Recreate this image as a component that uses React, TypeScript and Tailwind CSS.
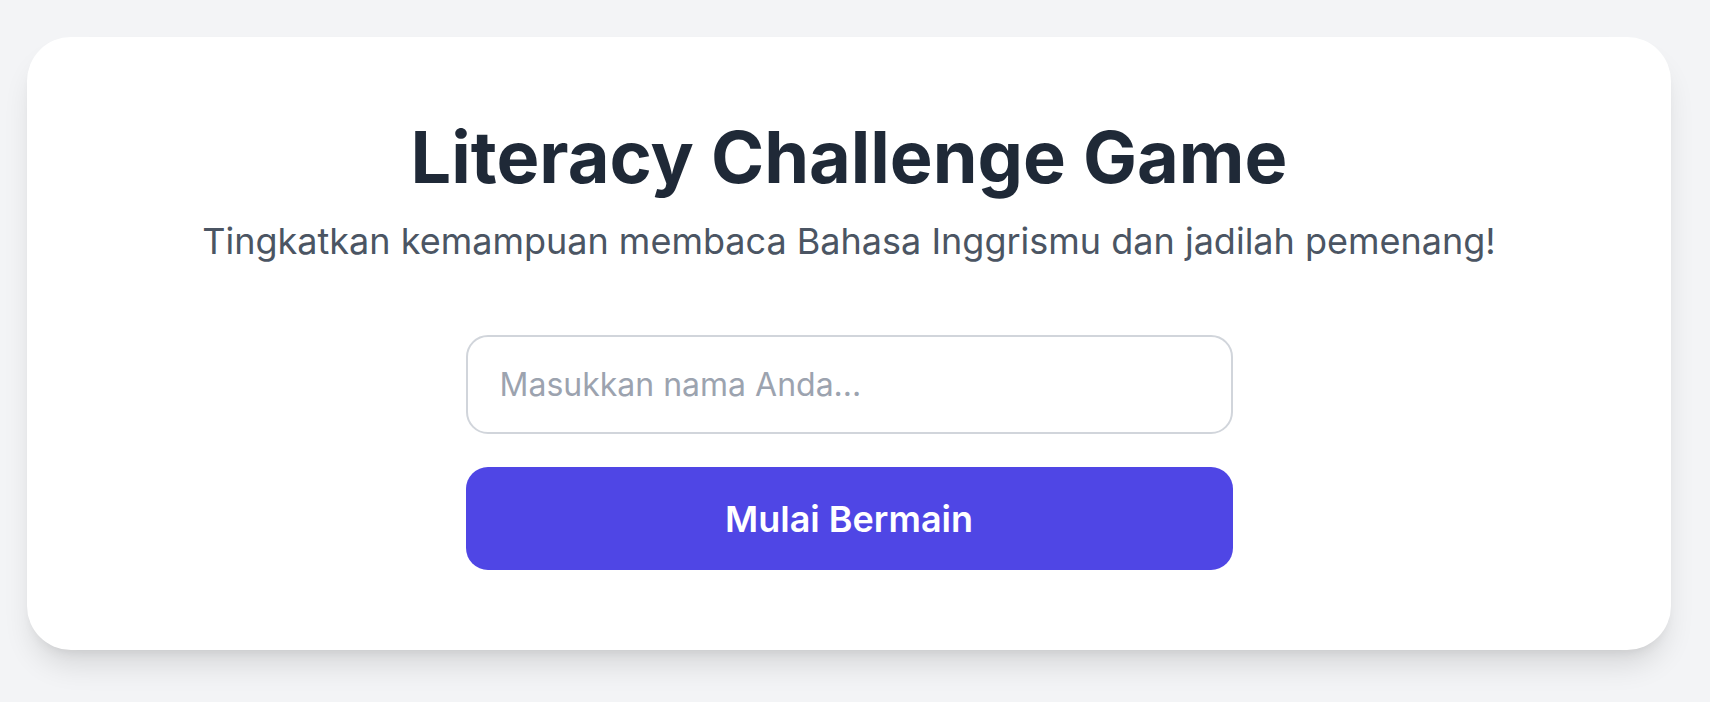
import { useState } from "react";

export default function App() {
  const [name, setName] = useState("");

  return (
    <div className="min-h-screen bg-[#f3f4f6] pl-[27px] pr-[39px] pt-[37px] pb-[52px] font-['Inter',_'Liberation_Sans',_sans-serif]">
      <div className="flex flex-col items-center rounded-[44px] bg-white pt-[84px] pb-[80px] shadow-[0_20px_30px_-6px_rgba(0,0,0,0.12),0_8px_12px_-6px_rgba(0,0,0,0.08)]">
        <h1 className="text-7xl font-bold leading-none text-[#1f2937]">
          Literacy Challenge Game
        </h1>
        <p className="mt-7 text-4xl leading-10 text-[#4b5563]">
          Tingkatkan kemampuan membaca Bahasa Inggrismu dan jadilah pemenang!
        </p>

        <div className="mt-[74px] flex w-[767px] flex-col gap-[33px]">
          <input
            value={name}
            onChange={(e) => setName(e.target.value)}
            placeholder="Masukkan nama Anda..."
            className="h-[99px] w-full rounded-[22px] border-2 border-[#d1d5db] bg-white px-8 text-[32px] text-[#1f2937] outline-none placeholder:text-[#9ca3af]"
          />
          <button className="h-[103px] w-full rounded-[22px] bg-[#4f46e5] text-4xl font-semibold text-white">
            Mulai Bermain
          </button>
        </div>
      </div>
    </div>
  );
}
